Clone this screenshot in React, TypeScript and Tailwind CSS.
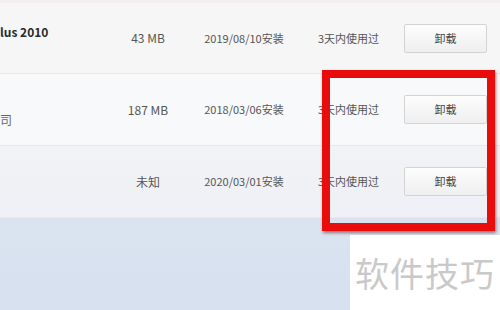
import React from "react";

const font = { fontFamily: '"Noto Sans CJK SC", "Microsoft YaHei", sans-serif' };

function Row({ name, pub, size, date, bg, h }: { name?: string; pub?: string; size: string; date: string; bg: string; h: string }) {
  return (
    <div className={`flex items-center ${h} ${bg} border-b border-[#e6e8ee]`}>
      <div className="w-[110px] h-full relative">
        {name && <div className="absolute left-0 top-[20px] text-[12px] font-bold text-[#2a2a2a]">{name}</div>}
        {pub && <div className="absolute left-0 top-[37px] text-[12px] text-[#666]">{pub}</div>}
      </div>
      <div className="w-[76px] text-center text-[12px] text-[#555]">{size}</div>
      <div className="w-[116px] text-center text-[11px] text-[#555]">{date}</div>
      <div className="w-[102px] pl-[16px] text-[11px] text-[#555]">3天内使用过</div>
      <div className="w-[83px] h-[29px] border border-[#d3d3d3] rounded-[2px] bg-gradient-to-b from-[#fdfdfd] to-[#efefef] flex items-center justify-center text-[11px] text-[#444]">卸载</div>
    </div>
  );
}

export default function App() {
  return (
    <div className="relative w-[500px] h-[310px] overflow-hidden bg-gradient-to-b from-[#e2e7f0] to-[#d7e1ef]" style={font}>
      <div className="h-[3px] bg-[#f2eef2]" />
      <Row name="lus 2010" size="43 MB" date="2019/08/10安装" bg="bg-[#f6f6f7]" h="h-[71px]" />
      <Row pub="司" size="187 MB" date="2018/03/06安装" bg="bg-[#f8f9fa]" h="h-[72px]" />
      <Row size="未知" date="2020/03/01安装" bg="bg-gradient-to-b from-[#f2f3f6] to-[#eef0f5]" h="h-[72px]" />
      <div className="absolute left-[322px] top-[70px] w-[173px] h-[161px] border-[8px] border-[#e80c0c] shadow-[1px_2px_3px_rgba(80,0,0,0.5)]" />
      <div className="absolute left-[350px] top-[235px] w-[150px] h-[75px] bg-white flex items-center justify-center">
        <span className="text-[34px] tracking-[1px] text-[#c9c9c9]" style={font}>软件技巧</span>
      </div>
    </div>
  );
}
